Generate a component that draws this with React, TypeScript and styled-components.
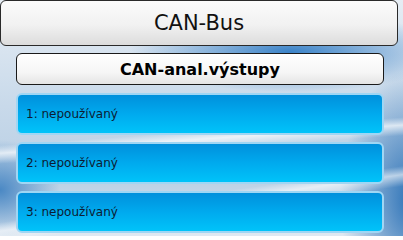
import React from 'react'
import styled, { createGlobalStyle } from 'styled-components'

const GlobalStyle = createGlobalStyle`
  html, body {
    margin: 0;
    padding: 0;
    width: 403px;
    height: 236px;
    overflow: hidden;
  }
  body {
    font-family: "DejaVu Sans", Verdana, sans-serif;
  }
`

const outputs = ['1: nepoužívaný', '2: nepoužívaný', '3: nepoužívaný']

export default function App() {
  return (
    <>
      <GlobalStyle />
      <Screen>
        <TitleBar>CAN-Bus</TitleBar>
        <Content>
          <SubHeader>CAN-anal.výstupy</SubHeader>
          <List>
            {outputs.map((label) => (
              <Row key={label}>{label}</Row>
            ))}
          </List>
        </Content>
      </Screen>
    </>
  )
}

const Screen = styled.div`
  width: 403px;
  height: 236px;
  box-sizing: border-box;
  padding-right: 5px;
  display: flex;
  flex-direction: column;
  gap: 7px;
  background:
    linear-gradient(176deg, transparent 0 55%, rgba(255, 255, 255, 0.7) 58%, transparent 62%),
    linear-gradient(172deg, transparent 0 76%, rgba(255, 255, 255, 0.6) 79%, transparent 83%),
    radial-gradient(ellipse 70px 130px at 410px 200px, #2f74b8 0%, rgba(47, 116, 184, 0) 100%),
    radial-gradient(ellipse 60px 50px at 0px 190px, #4a88c4 0%, rgba(74, 136, 196, 0) 100%),
    radial-gradient(ellipse 160px 40px at 290px 52px, #3b83c8 0%, rgba(59, 131, 200, 0) 100%),
    linear-gradient(180deg, #e6edf4 0%, #c8d9ea 45%, #b9cfe4 75%, #dfe8f1 100%);
`

const TitleBar = styled.div`
  height: 46px;
  box-sizing: border-box;
  border: 1px solid #2a2a2a;
  border-radius: 6px;
  background: linear-gradient(180deg, #fbfbfb 0%, #f1f1f1 55%, #dcdcdc 100%);
  display: flex;
  align-items: center;
  justify-content: center;
  font-size: 21px;
  color: #111;
`

const Content = styled.div`
  padding: 0 14px 0 16px;
  display: flex;
  flex-direction: column;
  gap: 8px;
`

const SubHeader = styled.div`
  height: 32px;
  box-sizing: border-box;
  border: 1px solid #1a1a1a;
  border-radius: 6px;
  background: linear-gradient(180deg, #ffffff 0%, #f6f6f6 60%, #e4e4e4 100%);
  display: flex;
  align-items: center;
  justify-content: center;
  font-size: 16px;
  font-weight: bold;
  color: #000;
`

const List = styled.div`
  display: flex;
  flex-direction: column;
  gap: 7px;
`

const Row = styled.div`
  height: 42px;
  box-sizing: border-box;
  border: 2px solid #9fd6f4;
  border-radius: 6px;
  background: linear-gradient(180deg, #0090dc 0%, #00aaee 50%, #00c3f9 100%);
  display: flex;
  align-items: center;
  padding-left: 8px;
  font-size: 12px;
  color: #0c1c33;
`
